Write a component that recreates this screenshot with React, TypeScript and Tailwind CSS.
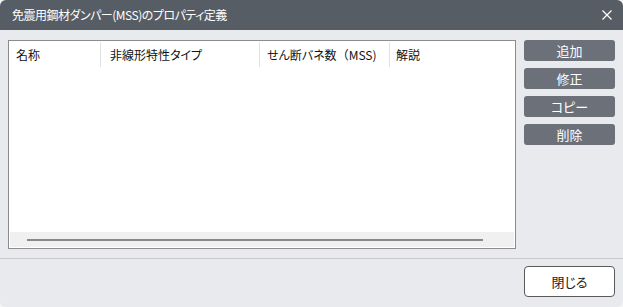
import React from "react";

const font = "font-['Meiryo_UI','Noto_Sans_CJK_JP',sans-serif] [font-feature-settings:'palt']";

export default function App() {
  const sideButtons = ["追加", "修正", "コピー", "削除"];
  return (
    <div className={`w-[623px] h-[307px] bg-[#f4f4f4] ${font}`}>
      <div className="w-full h-full rounded-[6px] overflow-hidden bg-[#e9eaee] flex flex-col">
        <div className="h-[30px] shrink-0 bg-[#575d64] flex items-center justify-between pl-[12px] pr-[11px]">
          <span className="text-white text-[12px] tracking-[-0.5px] leading-none">免震用鋼材ダンパー(MSS)のプロパティ定義</span>
          <svg width="10" height="10" viewBox="0 0 10 10" className="block">
            <path d="M0.5 0.5 L9.5 9.5 M9.5 0.5 L0.5 9.5" stroke="white" strokeWidth="1.2" />
          </svg>
        </div>
        <div className="flex gap-[8px] pt-[10px] px-[8px]">
          <div className="w-[508px] h-[209px] border border-[#8c8c8c] bg-white p-[1px] flex flex-col">
            <div className="flex h-[25px] text-[12px] text-[#111]">
              <div className="w-[91px] border-r border-[#e2e2e2] pl-[6px] flex items-center">名称</div>
              <div className="w-[159px] border-r border-[#e2e2e2] pl-[9px] flex items-center">非線形特性タイプ</div>
              <div className="w-[130px] border-r border-[#e2e2e2] pl-[7px] flex items-center">
                せん断バネ数<span className="[font-feature-settings:normal]">（</span>MSS)
              </div>
              <div className="flex-1 pl-[6px] flex items-center">解説</div>
            </div>
            <div className="flex-1" />
            <div className="h-[15px] bg-[#f0f0f0] flex items-center pl-[17px]">
              <div className="w-[456px] h-[2px] bg-[#888888]" />
            </div>
          </div>
          <div className="flex flex-col gap-[7px] w-[91px]">
            {sideButtons.map((b) => (
              <div
                key={b}
                className="h-[21px] rounded-[3px] bg-[#6b7079] text-white text-[13px] flex items-center justify-center"
              >
                {b}
              </div>
            ))}
          </div>
        </div>
        <div className="mt-[9px] h-px bg-[#c8c9cc]" />
        <div className="flex justify-end pt-[7px] pr-[8px]">
          <div className="w-[91px] h-[31px] rounded-[4px] border border-[#5a5a5a] bg-white text-[13px] text-[#222] flex items-center justify-center">
            閉じる
          </div>
        </div>
      </div>
    </div>
  );
}
